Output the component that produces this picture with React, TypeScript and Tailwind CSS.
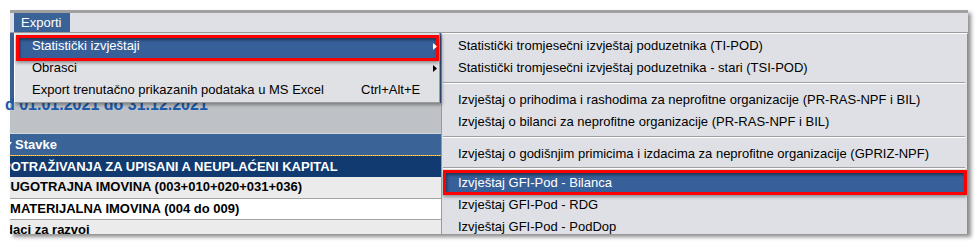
import React from "react";

interface MenuRowProps {
  label: string;
  shortcut?: string;
  arrow?: boolean;
  active?: boolean;
  frame?: string;
  indent: string;
}

const Arrow = ({ white }: { white?: boolean }) => (
  <svg
    width="4"
    height="7"
    viewBox="0 0 4 7"
    className="absolute right-[2px] top-[8px] z-10"
  >
    <path d="M0 0 L4 3.5 L0 7 Z" fill={white ? "#ffffff" : "#000000"} />
  </svg>
);

const MenuRow = ({ label, shortcut, arrow, active, frame, indent }: MenuRowProps) => (
  <div className="relative h-[22px] leading-[22px] whitespace-nowrap">
    {active && (
      <div
        className={`absolute border-[3px] border-[#ff0000] bg-[#37609a] shadow-[inset_1px_2px_3px_rgba(0,0,0,0.45),0_2px_3px_rgba(0,0,0,0.35)] ${frame}`}
      />
    )}
    <div className={`relative z-10 flex ${indent} ${active ? "text-white" : "text-black"}`}>
      <span className={shortcut ? "w-[329px]" : ""}>{label}</span>
      {shortcut && <span>{shortcut}</span>}
    </div>
    {arrow && <Arrow white={active} />}
  </div>
);

const Separator = ({ h, pt }: { h: string; pt: string }) => (
  <div className={`${h} ${pt} pl-[1px] pr-[2px]`}>
    <div className="border-t border-[#a0a0a0] border-b border-b-white" />
  </div>
);

const subItems = [
  "Statistički tromjesečni izvještaj poduzetnika (TI-POD)",
  "Statistički tromjesečni izvještaj poduzetnika - stari (TSI-POD)",
];

const App = () => {
  return (
    <div className="w-[979px] h-[245px] bg-white pt-[10px] pl-[10px] font-['Liberation_Sans',Arial,sans-serif] text-[13px] text-black overflow-hidden">
      <div className="w-[958px] h-[224px] flex flex-col bg-[#dfe0e5] shadow-[3px_3px_4px_rgba(0,0,0,0.45)]">
        {/* menu bar */}
        <div className="h-[23px] shrink-0 border-t-[3px] border-[#a0a0a0] border-b border-b-[#9c9c9c] bg-[#dfe0e5] flex">
          <div className="ml-[4px] pl-[7px] pr-[9px] h-[19px] leading-[19px] bg-[#3b6296] text-white">
            Exporti
          </div>
        </div>

        <div className="flex h-[201px]">
          {/* page behind the menu */}
          <div className="w-[431px] shrink-0 relative flex flex-col">
            <div className="h-[100px] shrink-0 bg-[#bec1c5] flex flex-col">
              <div className="h-[70px] shrink-0 bg-[#3b5f94]" />
              <div className="-mt-[7px] -ml-[5px] text-[16px] leading-[18px] font-bold text-[#1c5aaa] whitespace-nowrap">
                d 01.01.2021 do 31.12.2021
              </div>
            </div>

            <div className="h-[101px] overflow-hidden font-bold whitespace-nowrap">
              <div className="h-[22px] border-t border-[#d3d6da] bg-[#3a6398] text-white flex items-center">
                <svg width="8" height="6" viewBox="0 0 8 6" className="-ml-[6px] mr-[3px]">
                  <path d="M0 0 L8 0 L4 6 Z" fill="#ffffff" />
                </svg>
                <span>Stavke</span>
              </div>
              <div className="border-t border-dotted border-[#e3a33b]" />
              <div className="h-[21px] leading-[21px] bg-[#113a70] text-white">
                <div className="-ml-[8px]">POTRAŽIVANJA ZA UPISANI A NEUPLAĆENI KAPITAL</div>
              </div>
              <div className="h-[22px] leading-[20px] bg-[#ebebeb] border-b border-[#a4a4a4]">
                <div className="-ml-[9px]">DUGOTRAJNA IMOVINA (003+010+020+031+036)</div>
              </div>
              <div className="h-[21px] leading-[20px] bg-white border-b border-[#a4a4a4]">
                <div className="-ml-[18px]">NEMATERIJALNA IMOVINA (004 do 009)</div>
              </div>
              <div className="h-[21px] leading-[20px] bg-[#ebebeb]">
                <div className="-ml-[15px]">Izdaci za razvoj</div>
              </div>
            </div>

            {/* first dropdown */}
            <div className="absolute left-[4px] top-0 z-20 w-[426px] h-[70px] pt-[2px] bg-[#e0e1e5] border-l border-white border-r border-r-[#9a9a9a] border-b border-b-[#9a9a9a] shadow-[2px_2px_3px_rgba(0,0,0,0.35)]">
              <MenuRow
                label="Statistički izvještaji"
                arrow
                active
                indent="pl-[17px]"
                frame="top-0 -bottom-[4px] left-[1px] right-0"
              />
              <MenuRow label="Obrasci" arrow indent="pl-[17px]" />
              <MenuRow
                label="Export trenutačno prikazanih podataka u MS Excel"
                shortcut="Ctrl+Alt+E"
                indent="pl-[17px]"
              />
            </div>
          </div>

          {/* submenu */}
          <div className="flex-1 h-[201px] overflow-hidden bg-[#dfe0e5] border-l border-[#9a9a9a] border-t border-t-white border-r border-r-[#8c8c8c] pt-[1px]">
            {subItems.map((s) => (
              <MenuRow key={s} label={s} indent="pl-[16px]" />
            ))}
            <Separator h="h-[10px]" pt="pt-[3px]" />
            <MenuRow
              label="Izvještaj o prihodima i rashodima za neprofitne organizacije (PR-RAS-NPF i BIL)"
              indent="pl-[16px]"
            />
            <MenuRow
              label="Izvještaj o bilanci za neprofitne organizacije (PR-RAS-NPF i BIL)"
              indent="pl-[16px]"
            />
            <Separator h="h-[10px]" pt="pt-[3px]" />
            <MenuRow
              label="Izvještaj o godišnjim primicima i izdacima za neprofitne organizacije (GPRIZ-NPF)"
              indent="pl-[16px]"
            />
            <Separator h="h-[7px]" pt="pt-[2px]" />
            <MenuRow
              label="Izvještaj GFI-Pod - Bilanca"
              active
              indent="pl-[16px]"
              frame="-top-[2px] -bottom-[1px] left-[1px] right-0"
            />
            <MenuRow label="Izvještaj GFI-Pod - RDG" indent="pl-[16px]" />
            <MenuRow label="Izvještaj GFI-Pod - PodDop" indent="pl-[16px]" />
          </div>
        </div>
      </div>
    </div>
  );
};

export default App;
